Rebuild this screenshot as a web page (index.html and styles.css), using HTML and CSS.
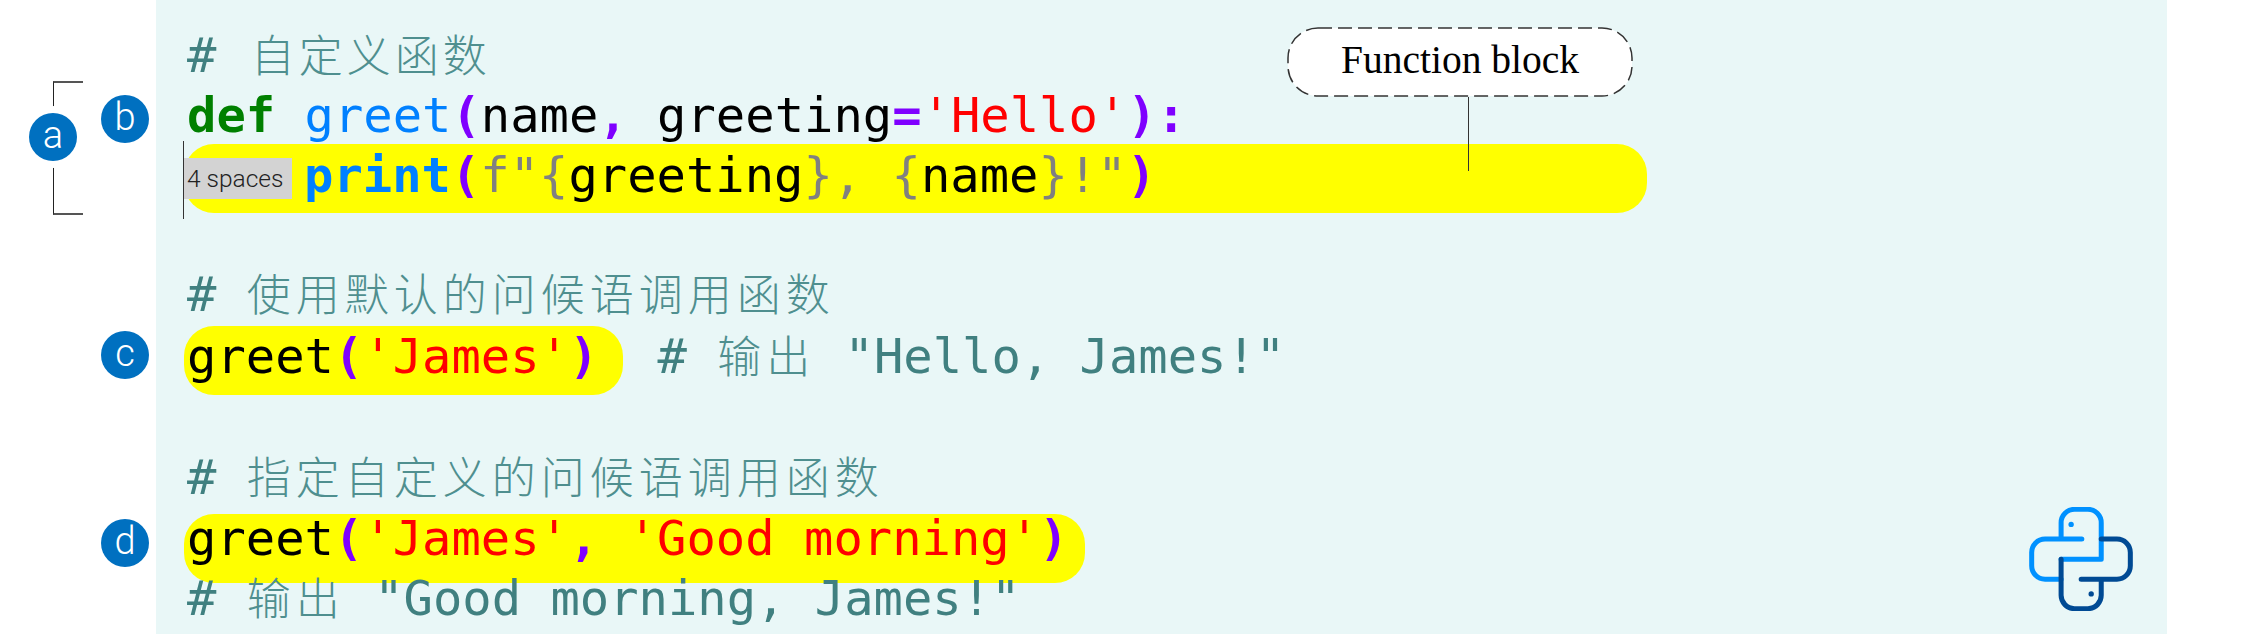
FILE: index.html
```html
<!DOCTYPE html>
<html lang="zh">
<head>
<meta charset="utf-8">
<title>Function</title>
<link rel="stylesheet" href="styles.css">
</head>
<body>
<main class="panel">
  <div class="row"><span class="c"># <span class="zh zh-first">自定义函数</span></span></div>
  <div class="row"><span class="badge badge-b">b</span><span class="kw">def</span> <span class="fn">greet</span><span class="op">(</span>name<span class="op">,</span> greeting<span class="op">=</span><span class="s">'Hello'</span><span class="op">):</span></div>
  <div class="row"><span class="mark mark-wide"><span class="cursor"></span><span class="spaces">4 spaces</span><span class="bi">print</span><span class="op">(</span><span class="g">f"{</span>greeting<span class="g">}, {</span>name<span class="g">}!"</span><span class="op">)</span></span></div>
  <div class="row row-blank-a"></div>
  <div class="row"><span class="c"># <span class="zh">使用默认的问候语调用函数</span></span></div>
  <div class="row row-push-2"><span class="badge badge-c">c</span><span class="mark mark-short">greet<span class="op">(</span><span class="s">'James'</span><span class="op">)</span></span> <span class="c"># <span class="zh">输出</span> "Hello, James!"</span></div>
  <div class="row row-blank-b"></div>
  <div class="row"><span class="c"># <span class="zh">指定自定义的问候语调用函数</span></span></div>
  <div class="row row-push-1"><span class="badge badge-d">d</span><span class="mark mark-long">greet<span class="op">(</span><span class="s">'James'</span><span class="op">,</span> <span class="s">'Good morning'</span><span class="op">)</span></span></div>
  <div class="row"><span class="c"># <span class="zh">输出</span> "Good morning, James!"</span></div>

  <div class="bracket"><span class="badge badge-a">a</span></div>
  <div class="bubble">
    <svg class="bubble-outline" viewBox="0 0 346 70" aria-hidden="true"><rect x="1" y="1" width="344" height="68" rx="30" ry="30"/></svg>
    <span class="bubble-text">Function block</span>
  </div>
  <div class="leader"></div>
  <svg class="logo" viewBox="237 82 311 311" aria-hidden="true">
    <g fill="none" stroke-width="15" stroke-linecap="round" stroke-linejoin="round">
      <path stroke="#0091ff" d="M395 178H285a40 40 0 0 0-40 40v40a40 40 0 0 0 40 40h48M333 170v-41a40 40 0 0 1 40-40h40a40 40 0 0 1 40 40v109H333"/>
      <path stroke="#004a94" d="M333 238v107a40 40 0 0 0 40 41h40a40 40 0 0 0 40-41v-47M393 298h107a40 40 0 0 0 40-40v-40a40 40 0 0 0-40-40h-47"/>
    </g>
    <circle cx="363" cy="134" r="8" fill="#0091ff"/>
    <circle cx="423" cy="342" r="8" fill="#004a94"/>
  </svg>
</main>
</body>
</html>
```
FILE: styles.css
```css
html, body {
  margin: 0;
  background: #fff;
}
body {
  width: 2251px;
  height: 634px;
  overflow: hidden;
}
.panel {
  position: relative;
  box-sizing: border-box;
  margin-left: 156px;
  width: 2011px;
  height: 634px;
  padding: 26px 0 0 31px;
  background: #e9f7f7;
  font: 48.8px/60px "DejaVu Sans Mono", "Noto Sans CJK SC", monospace;
  color: #000;
}
.row {
  position: relative;
  height: 60px;
  white-space: pre;
}
.row-blank-a { height: 59px; }
.row-blank-b { height: 61px; }
.row-push-2 { margin-top: 2px; }
.row-push-1 { margin-top: 1px; }
.c { color: #408080; }
.zh {
  margin-left: 1px;
  font-family: "Noto Sans CJK SC", sans-serif;
  font-size: 44px;
  font-weight: 300;
  line-height: 1;
  letter-spacing: 5px;
  color: #4f8f8f;
}
.zh-first { letter-spacing: 4px; margin-left: 5px; }
.kw { color: #008000; font-weight: 700; }
.fn { color: #0080ff; }
.bi { color: #0080ff; font-weight: 700; }
.op { color: #7f00ff; font-weight: 700; }
.s { color: #f00; }
.g { color: #808080; }

.mark {
  position: relative;
  display: inline-block;
  box-sizing: border-box;
  height: 69px;
  margin: -20px 0 -20px -3px;
  padding-left: 3px;
  background: #ff0;
  border-radius: 30px;
}
.mark-wide { width: 1463px; line-height: 64px; }
.mark-short { width: 439px; margin-right: 5px; line-height: 61px; }
.mark-long { width: 901px; line-height: 50px; }
.cursor {
  position: absolute;
  left: -1px;
  top: -3px;
  width: 1px;
  height: 78px;
  background: #333;
}
.spaces {
  display: inline-block;
  box-sizing: border-box;
  width: 108px;
  height: 41px;
  margin: 0 12px 0 -3px;
  padding-left: 3px;
  background: #d3d3d3;
  color: #222;
  font: 300 24.5px/41px Roboto, sans-serif;
  vertical-align: 5px;
}
.badge {
  position: absolute;
  left: -86px;
  width: 48px;
  height: 48px;
  border-radius: 50%;
  background: #0070c0;
  color: #fff;
  font: 300 38px/44px Roboto, sans-serif;
  text-align: center;
}
.badge-b { top: 9px; }
.badge-c { top: 4px; }
.badge-d { top: 10px; }
.bracket {
  position: absolute;
  left: -103px;
  top: 81px;
  width: 29px;
  height: 130px;
  border: solid #555;
  border-width: 2px 0;
  border-left: 1px solid #222;
}
.badge-a {
  left: -25px;
  top: 30px;
  box-shadow: 0 0 0 7px #fff;
}
.bubble {
  position: absolute;
  left: 1131px;
  top: 27px;
  width: 346px;
  height: 70px;
  font: 39.5px/66px "Liberation Serif", serif;
  text-align: center;
}
.bubble-outline {
  position: absolute;
  left: 0;
  top: 0;
  width: 346px;
  height: 70px;
}
.bubble-outline rect {
  fill: #fff;
  stroke: #333;
  stroke-width: 1.5;
  stroke-dasharray: 14 6;
}
.bubble-text { position: relative; }
.leader {
  position: absolute;
  left: 1312px;
  top: 97px;
  width: 1px;
  height: 74px;
  background: #333;
}
.logo {
  position: absolute;
  left: 1873px;
  top: 507px;
  width: 104px;
  height: 104px;
}
```
